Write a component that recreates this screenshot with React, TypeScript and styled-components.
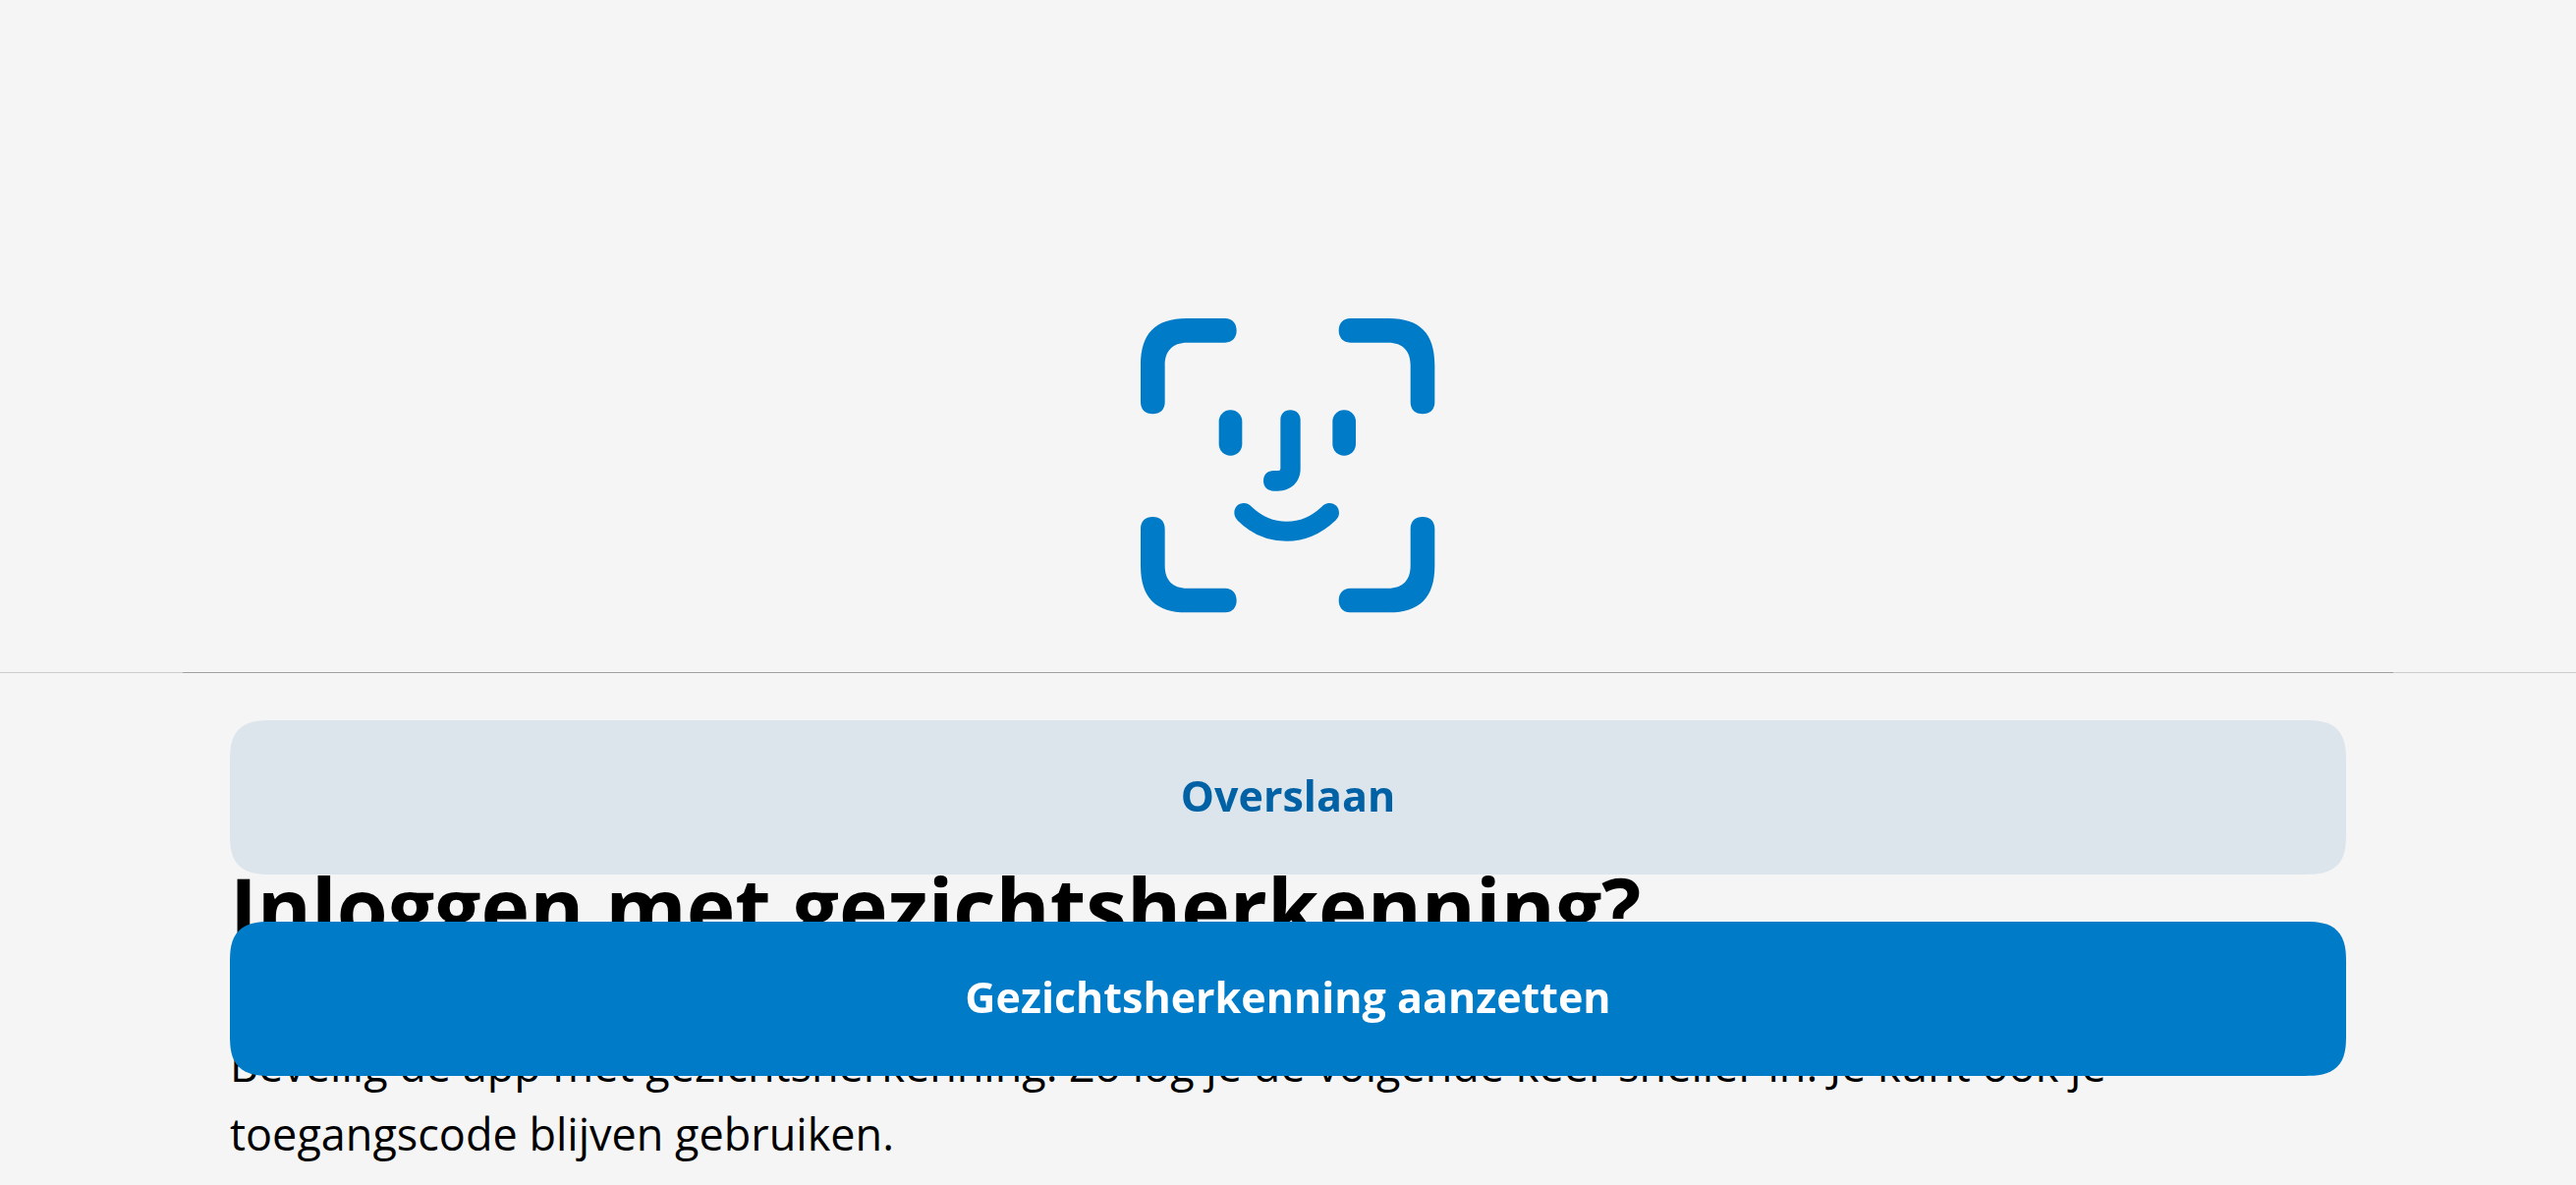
import React from "react";
import styled, { createGlobalStyle } from "styled-components";

const GlobalStyle = createGlobalStyle`
  *, *::before, *::after {
    box-sizing: border-box;
  }

  body {
    margin: 0;
    background: #f5f5f5;
    color: #000;
    font-family: "Open Sans", "Noto Sans", sans-serif;
  }
`;

const Screen = styled.main`
  min-height: 100vh;
  padding: 324px 234px 0;
`;

const Illustration = styled.div`
  display: flex;
  justify-content: center;
  margin-bottom: 247px;
`;

const FaceIcon = styled.svg`
  width: 300px;
  height: 300px;
  fill: #007bc7;
`;

const Title = styled.h1`
  margin: 0 0 74px;
  font-size: 84px;
  font-weight: 700;
  line-height: 104px;
`;

const Description = styled.p`
  margin: 0;
  font-size: 45px;
  line-height: 70px;
`;

const Footer = styled.footer`
  position: fixed;
  right: 0;
  bottom: 0;
  left: 0;
  padding: 0 186px 111px;
  border-top: 1px solid #cccccc;
`;

const Actions = styled.div`
  display: flex;
  flex-direction: column;
  gap: 48px;
  margin-top: -1px;
  padding: 48px 48px 0;
  border-top: 1px solid #a0a0a0;
`;

const ActionButton = styled.button<{ $primary?: boolean }>`
  height: 157px;
  padding: 0 48px 4px;
  border: 0;
  border-radius: 32px;
  background: ${(p) => (p.$primary ? "#007bc7" : "#dde5ec")};
  color: ${(p) => (p.$primary ? "#fff" : "#0062a5")};
  font: inherit;
  font-size: 43px;
  font-weight: 700;
  cursor: pointer;

  @supports (corner-shape: superellipse(1.5)) {
    border-radius: 42px;
    corner-shape: superellipse(1.5);
  }
`;

const CORNER =
  "M63 328V215C63 118 109 72 203 72H321C343 72 356 87 356 109C356 131 343 146 321 146H205C160 146 137 172 137 215V328C137 351 122 364 100 364C78 364 63 351 63 328Z";

function FaceScan() {
  return (
    <FaceIcon viewBox="63 72 900 900" aria-hidden="true">
      <path d={CORNER} />
      <path d={CORNER} transform="matrix(-1 0 0 1 1024 0)" />
      <path d={CORNER} transform="matrix(1 0 0 -1 0 1042)" />
      <path d={CORNER} transform="matrix(-1 0 0 -1 1024 1042)" />
      <rect x="302" y="352" width="71" height="139" rx="35" />
      <rect x="649" y="352" width="71" height="139" rx="35" />
      <path d="M490 382C490 364 502 352 520 352C538 352 551 364 551 382V532C551 572 522 599 482 599H470C450 599 438 587 438 568C438 549 450 537 470 537H484Q490 537 490 531Z" />
      <path d="M349 666C349 648 361 636 379 636Q392 636 402 647Q449 692 509 692Q569 692 616 647Q627 636 639 636C657 636 669 649 669 666Q669 678 658 689Q591 752 509 752Q422 752 360 690Q349 679 349 666Z" />
    </FaceIcon>
  );
}

export default function App() {
  return (
    <>
      <GlobalStyle />
      <Screen>
        <Illustration>
          <FaceScan />
        </Illustration>
        <Title>Inloggen met gezichtsherkenning?</Title>
        <Description>
          Beveilig de app met gezichtsherkenning. Zo log je de volgende keer
          sneller in. Je kunt ook je toegangscode blijven gebruiken.
        </Description>
      </Screen>
      <Footer>
        <Actions>
          <ActionButton type="button">Overslaan</ActionButton>
          <ActionButton type="button" $primary>
            Gezichtsherkenning aanzetten
          </ActionButton>
        </Actions>
      </Footer>
    </>
  );
}
